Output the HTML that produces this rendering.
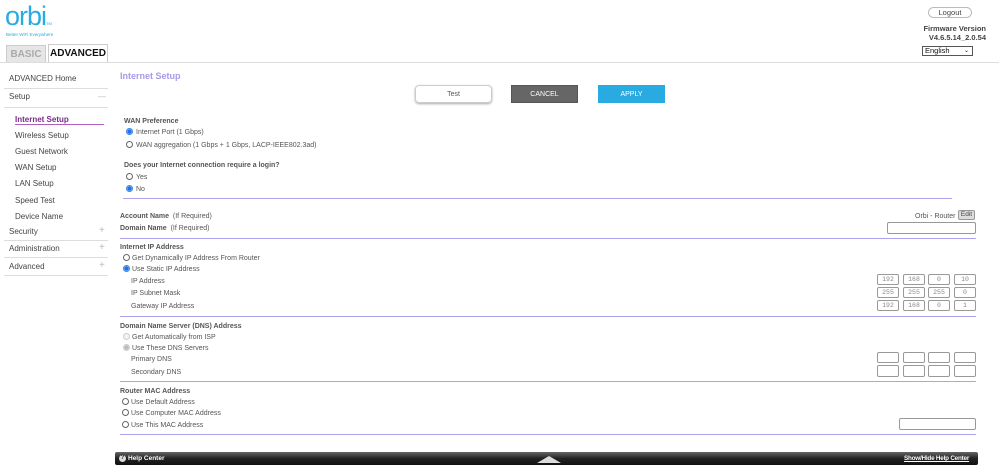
<!DOCTYPE html>
<html><head><meta charset="utf-8">
<style>
*{margin:0;padding:0;box-sizing:border-box}
body{width:999px;height:475px;background:#fff;position:relative;overflow:hidden;font-family:"Liberation Sans",Arial,sans-serif;color:#555}
.a{position:absolute;white-space:nowrap}
.t{font-size:7px;color:#555;line-height:9px}
.b{font-weight:bold}
.s{font-size:8px;color:#444;line-height:10px}
.hl{position:absolute;height:1px;background:#a9a3f0;left:120px;width:856px}
.hl2{position:absolute;height:1px;background:#ddd}
.r{position:absolute;width:7px;height:7px;border:1px solid #666;border-radius:50%;background:#fff}
.r.on{border-color:#3b82e6;background:radial-gradient(circle,#1a73e8 0 2px,#fff 2.5px)}
.r.dis{border-color:#ccc;background:#f3f3f3}
.r.dison{border-color:#ccc;background:radial-gradient(circle,#bbb 0 2px,#f3f3f3 2.5px)}
.in{position:absolute;border:1px solid #999;border-radius:2px;height:11px;width:22px;font-family:"Liberation Mono",monospace;font-size:6.5px;color:#888;text-align:center;line-height:9px;background:#fff}
</style></head><body>
<div class="a" style="left:5px;top:1px;font-size:27px;color:#29abe2;letter-spacing:-1px;font-family:'Liberation Sans',sans-serif">orbi<span style="font-size:4px;letter-spacing:0">TM</span></div>
<div class="a" style="left:6px;top:32px;font-size:4.5px;color:#29abe2">Better WiFi Everywhere</div>
<div class="a" style="left:6px;top:45px;width:40px;height:17px;background:#e6e6e6;border:1px solid #ccc;border-bottom:none;font-size:10px;font-weight:bold;color:#aaa;text-align:center;line-height:17px">BASIC</div>
<div class="a" style="left:48px;top:44px;width:60px;height:19px;background:#fff;border:1px solid #ccc;border-bottom:none;font-size:10px;font-weight:bold;color:#111;text-align:center;line-height:18px">ADVANCED</div>
<div class="hl2" style="left:0;top:62px;width:999px;background:#ddd"></div>
<div class="a" style="left:928px;top:7px;width:44px;height:11px;border:1px solid #bbb;border-radius:6px;font-size:7.5px;text-align:center;line-height:9px;color:#444">Logout</div>
<div class="a" style="left:920px;top:24px;width:66px;text-align:right;font-size:7.5px;font-weight:bold;color:#444;line-height:9px">Firmware Version<br>V4.6.5.14_2.0.54</div>
<div class="a" style="left:922px;top:46px;width:51px;height:10px;border:1px solid #555;font-size:7.5px;color:#111;line-height:8px;padding-left:2px">English<span style="position:absolute;right:3px;font-size:6px">&#8964;</span></div>

<div class="a s" style="left:9px;top:74px">ADVANCED Home</div>
<div class="hl2" style="left:4px;top:88px;width:104px"></div>
<div class="a s" style="left:9px;top:92px">Setup</div>
<div class="a" style="left:98px;top:92px;color:#bbb;font-size:8px">—</div>
<div class="hl2" style="left:4px;top:107px;width:104px"></div>
<div class="a s" style="left:15px;top:115px;color:#7b2a8a;font-weight:bold">Internet Setup</div>
<div class="hl2" style="left:15px;top:124px;width:89px;background:#b05fc0"></div>
<div class="a s" style="left:15px;top:131px">Wireless Setup</div>
<div class="a s" style="left:15px;top:147px">Guest Network</div>
<div class="a s" style="left:15px;top:163px">WAN Setup</div>
<div class="a s" style="left:15px;top:179px">LAN Setup</div>
<div class="a s" style="left:15px;top:196px">Speed Test</div>
<div class="a s" style="left:15px;top:212px">Device Name</div>
<div class="a s" style="left:9px;top:227px">Security</div><div class="a" style="left:99px;top:225px;color:#bbb;font-size:10px">+</div>
<div class="hl2" style="left:4px;top:240px;width:104px"></div>
<div class="a s" style="left:9px;top:244px">Administration</div><div class="a" style="left:99px;top:242px;color:#bbb;font-size:10px">+</div>
<div class="hl2" style="left:4px;top:257px;width:104px"></div>
<div class="a s" style="left:9px;top:262px">Advanced</div><div class="a" style="left:99px;top:260px;color:#bbb;font-size:10px">+</div>
<div class="hl2" style="left:4px;top:275px;width:104px"></div>

<div class="a" style="left:120px;top:71px;font-size:9px;font-weight:bold;color:#a59be8">Internet Setup</div>
<div class="a" style="left:415px;top:85px;width:77px;height:18px;border:1px solid #ccc;border-radius:4px;box-shadow:0 1px 2px #aaa;font-size:7px;text-align:center;line-height:17px;color:#555">Test</div>
<div class="a" style="left:511px;top:85px;width:67px;height:18px;background:#666;border:1px solid #555;font-size:7px;text-align:center;line-height:17px;color:#fff">CANCEL</div>
<div class="a" style="left:598px;top:85px;width:67px;height:18px;background:#29abe2;font-size:7px;text-align:center;line-height:19px;color:#fff">APPLY</div>

<div class="a t b" style="left:124px;top:117px">WAN Preference</div>
<div class="r on" style="left:126px;top:128px"></div><div class="a t" style="left:136px;top:128px">Internet Port (1 Gbps)</div>
<div class="r" style="left:126px;top:141px"></div><div class="a t" style="left:136px;top:141px">WAN aggregation (1 Gbps + 1 Gbps, LACP-IEEE802.3ad)</div>
<div class="a t b" style="left:124px;top:161px">Does your Internet connection require a login?</div>
<div class="r" style="left:126px;top:173px"></div><div class="a t" style="left:136px;top:173px">Yes</div>
<div class="r on" style="left:126px;top:185px"></div><div class="a t" style="left:136px;top:185px">No</div>
<div class="hl" style="left:123px;width:829px;top:198px"></div>

<div class="a t" style="left:120px;top:212px"><b>Account Name</b> &nbsp;(If Required)</div>
<div class="a t" style="left:915px;top:212px">Orbi - Router</div>
<div class="a" style="left:958px;top:210px;width:17px;height:10px;background:#ddd;border:1px solid #999;border-radius:2px;font-size:6.5px;text-align:center;line-height:8px;color:#444">Edit</div>
<div class="a t" style="left:120px;top:224px"><b>Domain Name</b> &nbsp;(If Required)</div>
<div class="in" style="left:887px;top:222px;width:89px;height:12px"></div>
<div class="hl" style="top:238px"></div>

<div class="a t b" style="left:120px;top:243px">Internet IP Address</div>
<div class="r" style="left:123px;top:254px"></div><div class="a t" style="left:132px;top:254px">Get Dynamically IP Address From Router</div>
<div class="r on" style="left:123px;top:265px"></div><div class="a t" style="left:132px;top:265px">Use Static IP Address</div>
<div class="a t" style="left:131px;top:277px">IP Address</div>
<div class="a t" style="left:131px;top:289px">IP Subnet Mask</div>
<div class="a t" style="left:131px;top:302px">Gateway IP Address</div>
<div class="in" style="left:877px;top:274px">192</div><div class="in" style="left:903px;top:274px">168</div><div class="in" style="left:928px;top:274px">0</div><div class="in" style="left:954px;top:274px">10</div>
<div class="in" style="left:877px;top:287px">255</div><div class="in" style="left:903px;top:287px">255</div><div class="in" style="left:928px;top:287px">255</div><div class="in" style="left:954px;top:287px">0</div>
<div class="in" style="left:877px;top:300px">192</div><div class="in" style="left:903px;top:300px">168</div><div class="in" style="left:928px;top:300px">0</div><div class="in" style="left:954px;top:300px">1</div>
<div class="hl" style="top:316px"></div>

<div class="a t b" style="left:120px;top:322px">Domain Name Server (DNS) Address</div>
<div class="r dis" style="left:123px;top:333px"></div><div class="a t" style="left:132px;top:333px">Get Automatically from ISP</div>
<div class="r dison" style="left:123px;top:344px"></div><div class="a t" style="left:132px;top:344px">Use These DNS Servers</div>
<div class="a t" style="left:131px;top:355px">Primary DNS</div>
<div class="a t" style="left:131px;top:368px">Secondary DNS</div>
<div class="in" style="left:877px;top:352px"></div><div class="in" style="left:903px;top:352px"></div><div class="in" style="left:928px;top:352px"></div><div class="in" style="left:954px;top:352px"></div>
<div class="in" style="left:877px;top:365px;height:12px"></div><div class="in" style="left:903px;top:365px;height:12px"></div><div class="in" style="left:928px;top:365px;height:12px"></div><div class="in" style="left:954px;top:365px;height:12px"></div>
<div class="hl" style="top:381px"></div>

<div class="a t b" style="left:120px;top:387px">Router MAC Address</div>
<div class="r" style="left:122px;top:398px"></div><div class="a t" style="left:131px;top:398px">Use Default Address</div>
<div class="r" style="left:122px;top:409px"></div><div class="a t" style="left:131px;top:409px">Use Computer MAC Address</div>
<div class="r" style="left:122px;top:421px"></div><div class="a t" style="left:131px;top:421px">Use This MAC Address</div>
<div class="in" style="left:899px;top:418px;width:77px;height:12px"></div>
<div class="hl" style="top:434px"></div>

<div class="a" style="left:115px;top:452px;width:863px;height:13px;background:linear-gradient(#666,#222 50%,#111);border-radius:2px"></div>
<div class="a" style="left:119px;top:455px;width:7px;height:7px;border-radius:50%;background:#ddd;font-size:6px;color:#222;text-align:center;line-height:7px;font-weight:bold">?</div>
<div class="a" style="left:128px;top:455px;font-size:6.5px;color:#fff;font-weight:bold">Help Center</div>
<div class="a" style="left:537px;top:456px;width:0;height:0;border-left:12px solid transparent;border-right:12px solid transparent;border-bottom:7px solid #ddd"></div>
<div class="a" style="left:904px;top:455px;font-size:6.3px;color:#fff;font-weight:bold;text-decoration:underline;letter-spacing:-0.2px">Show/Hide Help Center</div>
</body></html>
